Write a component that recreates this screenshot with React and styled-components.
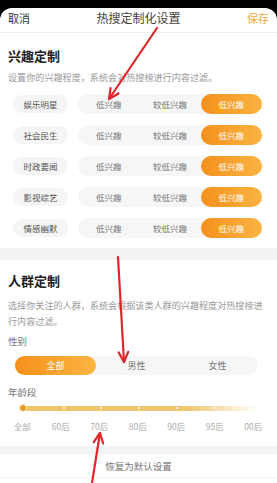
import React from 'react';
import styled, { createGlobalStyle } from 'styled-components';

const GlobalStyle = createGlobalStyle`
    html, body {
        margin: 0;
        padding: 0;
        background: #000;
    }
    body {
        font-family: "Noto Sans CJK SC", "Noto Sans", sans-serif;
        color: #333;
    }
`;

const Page = styled.div`
    position: relative;
    width: 277px;
    height: 483px;
    overflow: hidden;
    background: #000;
    padding-top: 8px;
    box-sizing: border-box;
`;

const Sheet = styled.div`
    background: #fff;
    border-radius: 12px 12px 0 0;
    height: 100%;
    overflow: hidden;
`;

const Header = styled.div`
    height: 25px;
    padding: 3px 8px 0;
    box-sizing: border-box;
    display: flex;
    justify-content: space-between;
    align-items: flex-start;
    border-bottom: 1px solid #eee;
    line-height: 14px;

    .side{
        font-size: 11px;
        width: 30px;
        color: #333;
    }
    .save{
        color: #f0a93a;
        text-align: right;
    }
    .title{
        font-size: 12px;
        color: #444;
    }
`;

const Section = styled.div`
    padding: ${p => p.$top}px 8px ${p => p.$bottom}px;
`;

const Title = styled.div`
    font-size: 13px;
    font-weight: 700;
    line-height: 18px;
    color: #222;
`;

const Desc = styled.div`
    margin-top: ${p => p.$gap}px;
    margin-right: -6px;
    font-size: 9.1px;
    line-height: ${p => p.$lh}px;
    color: #999;
`;

const Rows = styled.div`
    margin-top: 10px;
    display: flex;
    flex-direction: column;
    gap: 11px;
`;

const Row = styled.div`
    display: flex;
    align-items: center;
    height: 20px;
`;

const Tag = styled.div`
    width: 55px;
    height: 18px;
    margin-left: 5px;
    border-radius: 9px;
    background: #f5f5f5;
    display: flex;
    align-items: center;
    justify-content: center;
    font-size: 8.5px;
    color: #555;
`;

const Segment = styled.div`
    display: grid;
    grid-template-columns: repeat(3, 1fr);
    height: ${p => p.$h}px;
    width: ${p => p.$w}px;
    margin-left: ${p => p.$ml}px;
    border-radius: ${p => p.$h / 2}px;
    background: #f6f6f6;
`;

const Option = styled.div`
    display: flex;
    align-items: center;
    justify-content: center;
    border-radius: inherit;
    font-size: ${p => p.$fs}px;
    color: ${p => (p.$active ? '#fff' : '#777')};
    background: ${p => (p.$active ? 'linear-gradient(90deg, #f5901c, #fbb443)' : 'transparent')};
`;

const Band = styled.div`
    height: ${p => p.$h}px;
    background: #f3f3f3;
`;

const Label = styled.div`
    margin-top: ${p => p.$gap}px;
    font-size: 9.5px;
    line-height: 14px;
    color: #777;
`;

const Slider = styled.div`
    margin: 4px 0 0 14px;
    width: 236px;
    height: 10px;
    display: flex;
    align-items: center;
`;

const Track = styled.div`
    width: 100%;
    height: 5px;
    border-radius: 3px;
    background: linear-gradient(90deg, #efc469 0%, #efc772 70%, rgba(240, 200, 120, 0) 100%);
    display: flex;
    align-items: center;
    justify-content: space-between;
    padding-right: 5px;
    box-sizing: border-box;
`;

const Knob = styled.div`
    width: 8px;
    height: 8px;
    margin-left: -3px;
    border-radius: 50%;
    background: #e89a1a;
    border: 1px solid #fff3d8;
    box-sizing: border-box;
`;

const Dot = styled.div`
    width: 2px;
    height: 2px;
    border-radius: 50%;
    background: ${p => (p.$hidden ? 'transparent' : '#fff')};
`;

const Ticks = styled.div`
    margin: 7px 0 0 -5px;
    display: grid;
    grid-template-columns: repeat(7, 38.5px);
    font-size: 8.5px;
    line-height: 12px;
    color: #aaa;
    text-align: center;
`;

const Reset = styled.div`
    height: 23px;
    display: flex;
    align-items: center;
    justify-content: center;
    font-size: 9.5px;
    color: #777;
    border-bottom: 1px solid #f3f3f3;
`;

const Arrows = styled.svg`
    position: absolute;
    left: 0;
    top: 0;
    pointer-events: none;
`;

const topics = ['娱乐明星', '社会民生', '时政要闻', '影视综艺', '情感幽默'];
const levels = ['低兴趣', '较低兴趣', '低兴趣'];
const ages = ['全部', '60后', '70后', '80后', '90后', '95后', '00后'];

function Arrow({ x1, y1, x2, y2 }) {
    const a = Math.atan2(y2 - y1, x2 - x1);
    const l = 11;
    const s = 0.45;
    const p1 = `${x2 - l * Math.cos(a - s)},${y2 - l * Math.sin(a - s)}`;
    const p2 = `${x2 - l * Math.cos(a + s)},${y2 - l * Math.sin(a + s)}`;
    return (
        <g stroke="#e0262b" strokeWidth="2.2" strokeLinecap="round" fill="none">
            <line x1={x1} y1={y1} x2={x2} y2={y2} />
            <polyline points={`${p1} ${x2},${y2} ${p2}`} strokeLinejoin="round" />
        </g>
    );
}

export default function App() {
    return (
        <>
            <GlobalStyle />
            <Page>
                <Sheet>
                    <Header>
                        <span className="side">取消</span>
                        <span className="title">热搜定制化设置</span>
                        <span className="side save">保存</span>
                    </Header>

                    <Section $top={14} $bottom={10}>
                        <Title>兴趣定制</Title>
                        <Desc $gap={5} $lh={14}>设置你的兴趣程度，系统会对热搜榜进行内容过滤。</Desc>
                        <Rows>
                            {topics.map(t => (
                                <Row key={t}>
                                    <Tag>{t}</Tag>
                                    <Segment $h={20} $w={184} $ml={10}>
                                        {levels.map((l, i) => (
                                            <Option key={i} $fs={8.5} $active={i === 2}>{l}</Option>
                                        ))}
                                    </Segment>
                                </Row>
                            ))}
                        </Rows>
                    </Section>

                    <Band $h={12} />

                    <Section $top={12} $bottom={14}>
                        <Title>人群定制</Title>
                        <Desc $gap={7} $lh={16}>选择你关注的人群，系统会根据该类人群的兴趣程度对热搜榜进<br />行内容过滤。</Desc>
                        <Label $gap={5}>性别</Label>
                        <Segment $h={19} $w={243} $ml={7} style={{ marginTop: 8 }}>
                            {['全部', '男性', '女性'].map((g, i) => (
                                <Option key={g} $fs={9} $active={i === 0}>{g}</Option>
                            ))}
                        </Segment>
                        <Label $gap={10}>年龄段</Label>
                        <Slider>
                            <Track>
                                <Knob />
                                <Dot />
                                <Dot />
                                <Dot />
                                <Dot />
                                <Dot />
                                <Dot $hidden />
                            </Track>
                        </Slider>
                        <Ticks>
                            {ages.map(a => <span key={a}>{a}</span>)}
                        </Ticks>
                    </Section>

                    <Band $h={8} />
                    <Reset>恢复为默认设置</Reset>
                </Sheet>

                <Arrows width="277" height="483" viewBox="0 0 277 483">
                    <Arrow x1={157} y1={28} x2={109} y2={99} />
                    <Arrow x1={118} y1={257} x2={124} y2={362} />
                    <Arrow x1={92} y1={483} x2={100} y2={433} />
                </Arrows>
            </Page>
        </>
    );
}
